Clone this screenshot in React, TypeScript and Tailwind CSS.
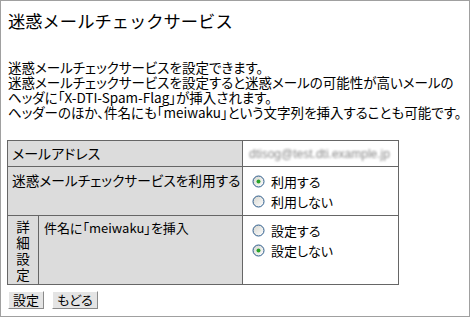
const jp = { fontFamily: '"MS PGothic", "Noto Sans CJK JP", sans-serif' };

function Radio({ checked }: { checked?: boolean }) {
  return (
    <svg width="13" height="13" viewBox="0 0 13 13" className="shrink-0">
      <defs>
        <linearGradient id="rg" x1="0" y1="0" x2="1" y2="1">
          <stop offset="0" stopColor="#d4d4ce" />
          <stop offset="1" stopColor="#ffffff" />
        </linearGradient>
      </defs>
      <circle cx="6.5" cy="6.5" r="5.5" fill="url(#rg)" stroke="#2a5a8a" />
      {checked && <circle cx="6.5" cy="6.5" r="2" fill="#2aa32a" />}
    </svg>
  );
}

function Option({ label, checked }: { label: string; checked?: boolean }) {
  return (
    <div className="flex items-center gap-[6px] h-[20px]">
      <Radio checked={checked} />
      <span>{label}</span>
    </div>
  );
}

function Button({ children }: { children: React.ReactNode }) {
  return (
    <button className="h-[18px] px-[4px] bg-[#e4e4e4] border border-t-white border-l-white border-r-[#8a8a8a] border-b-[#8a8a8a] text-[13px] leading-[16px] text-black">
      {children}
    </button>
  );
}

export default function App() {
  return (
    <div
      className="w-[470px] h-[317px] border border-[#a0a0a0] bg-white text-black overflow-hidden [font-feature-settings:'palt']"
      style={jp}
    >
      <h1 className="text-[17.3px] leading-[20px] pt-[10px] pl-[7px] [font-feature-settings:normal]">迷惑メールチェックサービス</h1>

      <div className="mt-[29px] pl-[7px] text-[13.5px] leading-[15px] whitespace-nowrap">
        <p>迷惑メールチェックサービスを設定できます。</p>
        <p>迷惑メールチェックサービスを設定すると迷惑メールの可能性が高いメールの</p>
        <p>ヘッダに「X-DTI-Spam-Flag」が挿入されます。</p>
        <p>ヘッダーのほか、件名にも「meiwaku」という文字列を挿入することも可能です。</p>
      </div>

      <table className="ml-[6px] mt-[20px] w-[391px] table-fixed border-collapse text-[13px] leading-[15px]">
        <colgroup>
          <col className="w-[31px]" />
          <col className="w-[204px]" />
          <col className="w-[156px]" />
        </colgroup>
        <tbody>
          <tr className="h-[26px]">
            <td colSpan={2} className="border border-[#666] bg-[#dcdcdc] px-[4px] align-middle text-[14px]">
              メールアドレス
            </td>
            <td className="border border-[#666] px-[6px] align-middle">
              <span className="text-[12px] text-[#8a8a8a] blur-[0.8px]" style={{ fontFamily: '"Liberation Sans", sans-serif' }}>
                dtisog@test.dti.example.jp
              </span>
            </td>
          </tr>
          <tr className="h-[49px]">
            <td colSpan={2} className="border border-[#666] bg-[#dcdcdc] px-[4px] pt-[5px] align-top whitespace-nowrap text-[13.7px] leading-[16px]">
              迷惑メールチェックサービスを利用する
            </td>
            <td className="border border-[#666] px-[9px] pt-[4px] align-top">
              <Option label="利用する" checked />
              <Option label="利用しない" />
            </td>
          </tr>
          <tr className="h-[69px]">
            <td className="border border-[#666] bg-[#dcdcdc] pt-[2px] align-top text-center text-[13.5px] leading-[16px]">
              <div>詳</div>
              <div>細</div>
              <div>設</div>
              <div>定</div>
            </td>
            <td className="border border-[#666] bg-[#dcdcdc] px-[5px] pt-[4px] align-top">
              件名に「meiwaku」を挿入
            </td>
            <td className="border border-[#666] px-[9px] pt-[4px] align-top">
              <Option label="設定する" />
              <Option label="設定しない" checked />
            </td>
          </tr>
        </tbody>
      </table>

      <div className="flex gap-[8px] pl-[7px] mt-[6px]">
        <Button>設定</Button>
        <Button>もどる</Button>
      </div>
    </div>
  );
}
